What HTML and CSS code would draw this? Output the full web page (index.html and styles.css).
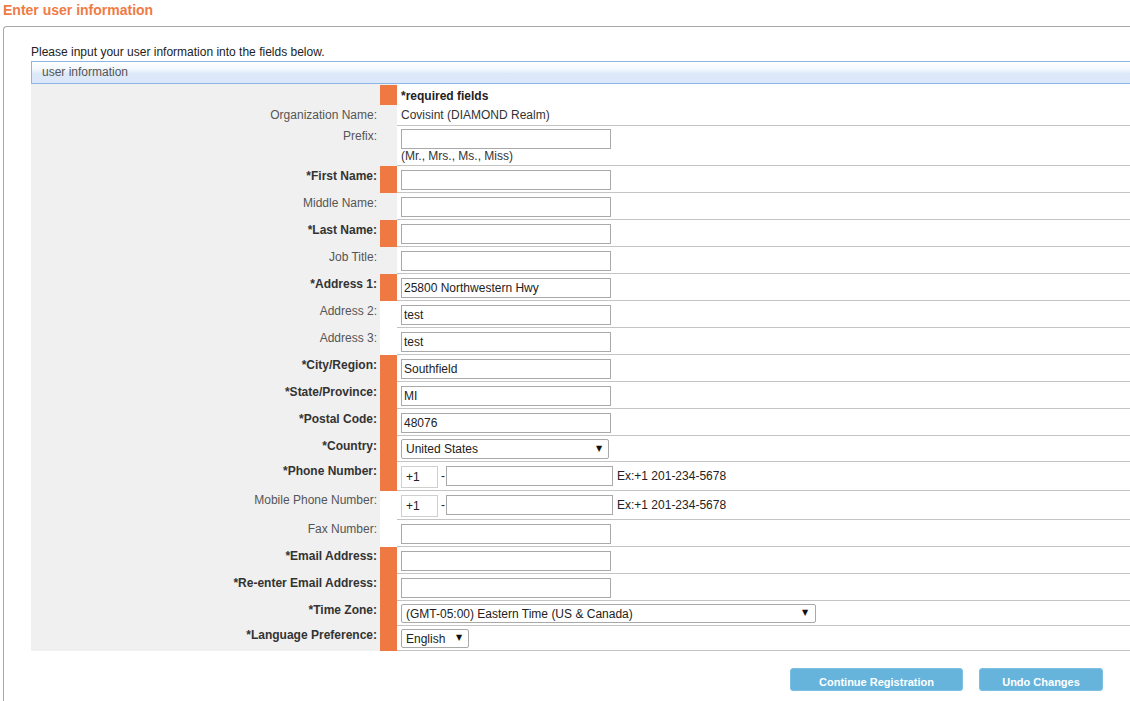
FILE: index.html
```html
<!DOCTYPE html>
<html lang="en">
<head>
<meta charset="utf-8">
<title>Enter user information</title>
<link rel="stylesheet" href="styles.css">
</head>
<body>
<h1 class="page-title">Enter user information</h1>
<div class="panel">
  <p class="intro">Please input your user information into the fields below.</p>
  <div class="section-head">user information</div>
  <table class="form">
    <colgroup><col class="c-label"><col class="c-mark"><col></colgroup>
    <tr class="r-note">
      <td class="lbl"></td><td class="mark req"></td>
      <td class="val plain nob"><strong>*required fields</strong></td>
    </tr>
    <tr class="r-text">
      <td class="lbl">Organization Name:</td><td class="mark"></td>
      <td class="val plain">Covisint (DIAMOND Realm)</td>
    </tr>
    <tr>
      <td class="lbl">Prefix:</td><td class="mark"></td>
      <td class="val prefix"><input class="txt" type="text"><div class="hint">(Mr., Mrs., Ms., Miss)</div></td>
    </tr>
    <tr>
      <td class="lbl req">*First Name:</td><td class="mark req"></td>
      <td class="val"><input class="txt" type="text"></td>
    </tr>
    <tr>
      <td class="lbl">Middle Name:</td><td class="mark"></td>
      <td class="val"><input class="txt" type="text"></td>
    </tr>
    <tr>
      <td class="lbl req">*Last Name:</td><td class="mark req"></td>
      <td class="val"><input class="txt" type="text"></td>
    </tr>
    <tr>
      <td class="lbl">Job Title:</td><td class="mark"></td>
      <td class="val"><input class="txt" type="text"></td>
    </tr>
    <tr>
      <td class="lbl req">*Address 1:</td><td class="mark req"></td>
      <td class="val"><input class="txt" type="text" value="25800 Northwestern Hwy"></td>
    </tr>
    <tr>
      <td class="lbl">Address 2:</td><td class="mark none"></td>
      <td class="val"><input class="txt" type="text" value="test"></td>
    </tr>
    <tr>
      <td class="lbl">Address 3:</td><td class="mark none"></td>
      <td class="val"><input class="txt" type="text" value="test"></td>
    </tr>
    <tr>
      <td class="lbl req">*City/Region:</td><td class="mark req"></td>
      <td class="val"><input class="txt" type="text" value="Southfield"></td>
    </tr>
    <tr>
      <td class="lbl req">*State/Province:</td><td class="mark req"></td>
      <td class="val"><input class="txt" type="text" value="MI"></td>
    </tr>
    <tr>
      <td class="lbl req">*Postal Code:</td><td class="mark req"></td>
      <td class="val"><input class="txt" type="text" value="48076"></td>
    </tr>
    <tr>
      <td class="lbl req">*Country:</td><td class="mark req"></td>
      <td class="val sel-cell">
        <span class="select country"><select><option>United States</option></select><span class="caret">▼</span></span>
      </td>
    </tr>
    <tr>
      <td class="lbl req tight">*Phone Number:</td><td class="mark req"></td>
      <td class="val phone-cell">
        <div class="phone"><input class="cc" type="text" value="+1"><span class="dash">-</span><input class="num" type="text"><span class="ex">Ex:+1 201-234-5678</span></div>
      </td>
    </tr>
    <tr>
      <td class="lbl tight">Mobile Phone Number:</td><td class="mark none"></td>
      <td class="val phone-cell">
        <div class="phone"><input class="cc" type="text" value="+1"><span class="dash">-</span><input class="num" type="text"><span class="ex">Ex:+1 201-234-5678</span></div>
      </td>
    </tr>
    <tr>
      <td class="lbl tight">Fax Number:</td><td class="mark none"></td>
      <td class="val"><input class="txt" type="text"></td>
    </tr>
    <tr>
      <td class="lbl req tight">*Email Address:</td><td class="mark req"></td>
      <td class="val"><input class="txt" type="text"></td>
    </tr>
    <tr>
      <td class="lbl req tight">*Re-enter Email Address:</td><td class="mark req"></td>
      <td class="val"><input class="txt" type="text"></td>
    </tr>
    <tr>
      <td class="lbl req tight">*Time Zone:</td><td class="mark req"></td>
      <td class="val sel-cell small">
        <span class="select tz"><select><option>(GMT-05:00) Eastern Time (US &amp; Canada)</option></select><span class="caret">▼</span></span>
      </td>
    </tr>
    <tr>
      <td class="lbl req tight">*Language Preference:</td><td class="mark req"></td>
      <td class="val sel-cell small">
        <span class="select lang"><select><option>English</option></select><span class="caret">▼</span></span>
      </td>
    </tr>
  </table>
  <div class="actions">
    <button class="btn btn-continue" type="button">Continue Registration</button>
    <button class="btn btn-undo" type="button">Undo Changes</button>
  </div>
</div>
</body>
</html>
```

FILE: styles.css
```css
html, body {
  margin: 0;
  background: #fff;
  overflow: hidden;
}
body {
  width: 1127px;
  height: 701px;
  padding-left: 3px;
  font-family: "Liberation Sans", Arial, sans-serif;
  font-size: 12px;
  color: #333;
}
.page-title {
  margin: 0;
  padding-top: 2px;
  font-size: 14px;
  line-height: 16px;
  font-weight: bold;
  color: #ef7b45;
}
.panel {
  margin-top: 8px;
  width: 1110px;
  height: 656px;
  padding: 18px 0 0 27px;
  border-top: 1px solid #a7a7a7;
  border-left: 1px solid #a7a7a7;
  border-top-left-radius: 4px;
}
.intro {
  margin: 0;
  line-height: 14px;
  color: #222;
}
.section-head {
  margin-top: 2px;
  height: 21px;
  line-height: 21px;
  padding-left: 10px;
  border: 1px solid #8db5e6;
  color: #555;
  background: linear-gradient(#ffffff 0%, #f3f8fe 35%, #dde9f9 55%, #dbe8f9 100%);
}
.form {
  width: 100%;
  table-layout: fixed;
  border-collapse: separate;
  border-spacing: 0;
}
.c-label { width: 349px; }
.c-mark { width: 17px; }
.form td {
  padding: 0;
  vertical-align: top;
}
.form td.lbl {
  padding: 3px 3px 0 0;
  text-align: right;
  line-height: 14px;
  background: #f0f0f0;
  color: #555;
}
.form td.lbl.tight { padding-top: 2px; }
.form td.lbl.req {
  font-weight: bold;
  color: #333;
}
.form td.mark { background: #f0f0f0; }
.form td.mark.req { background: #ef7943; }
.form td.mark.none { background: #fff; }
.r-note td.mark.req { border-top: 1px solid #f0f0f0; }
.form td.val {
  padding: 4px 0 2px 4px;
  border-bottom: 1px solid #c4c4c4;
  background: #fff;
}
.form td.val.plain {
  padding: 3px 0 3px 4px;
  line-height: 14px;
  color: #333;
}
.form td.val.plain strong { color: #222; }
.form td.val.nob {
  border-bottom: 0;
  padding: 5px 0 2px 4px;
}
.form td.val.prefix { padding: 3px 0 2px 4px; }
.hint {
  line-height: 14px;
  color: #333;
}
.txt {
  display: block;
  box-sizing: border-box;
  width: 210px;
  height: 20px;
  margin: 0;
  padding: 0 2px;
  border: 1px solid #a9a9a9;
  border-radius: 0;
  font: 12px "Liberation Sans", Arial, sans-serif;
  color: #222;
  background: #fff;
}
.form td.val.sel-cell { padding: 3px 0 2px 4px; }
.select {
  position: relative;
  display: block;
}
.select select {
  display: block;
  box-sizing: border-box;
  height: 20px;
  margin: 0;
  padding: 0 0 0 4px;
  border: 1px solid #a9a9a9;
  border-radius: 2px;
  background: #fff;
  font: 12px "Liberation Sans", Arial, sans-serif;
  color: #222;
  -webkit-appearance: none;
  appearance: none;
}
.small .select select { height: 19px; }
.select.country select { width: 208px; }
.select.tz select { width: 415px; }
.select.lang select { width: 68px; }
.caret {
  position: absolute;
  top: 5px;
  font-family: "DejaVu Sans", sans-serif;
  font-size: 8px;
  line-height: 10px;
  color: #111;
  pointer-events: none;
}
.small .caret { top: 4px; }
.country .caret { left: 195px; }
.tz .caret { left: 401px; }
.lang .caret { left: 55px; }
.form td.val.phone-cell { padding: 4px 0 2px 4px; }
.phone {
  display: flex;
  align-items: flex-start;
  height: 22px;
}
.phone input {
  box-sizing: border-box;
  margin: 0;
  padding: 0 2px;
  font: 12px "Liberation Sans", Arial, sans-serif;
  color: #222;
  background: #fff;
  border-radius: 0;
}
.phone .cc {
  width: 37px;
  height: 22px;
  padding-left: 4px;
  border: 1px solid #cfcfcf;
}
.phone .num {
  width: 167px;
  height: 20px;
  border: 1px solid #a9a9a9;
}
.dash {
  margin: 0 1px 0 3px;
  width: 4px;
  line-height: 20px;
  color: #222;
}
.ex {
  margin-left: 4px;
  line-height: 20px;
  color: #222;
}
.actions {
  display: flex;
  justify-content: flex-end;
  gap: 16px;
  margin-top: 17px;
  padding-right: 38px;
}
.btn {
  box-sizing: border-box;
  height: 23px;
  padding: 4px 0 0;
  border: 1px solid #7dbfe2;
  border-radius: 3px;
  background: #66b4dc;
  color: #fff;
  font: bold 11px "Liberation Sans", Arial, sans-serif;
  line-height: 16px;
  text-align: center;
}
.btn-continue { width: 173px; }
.btn-undo { width: 124px; }
```
